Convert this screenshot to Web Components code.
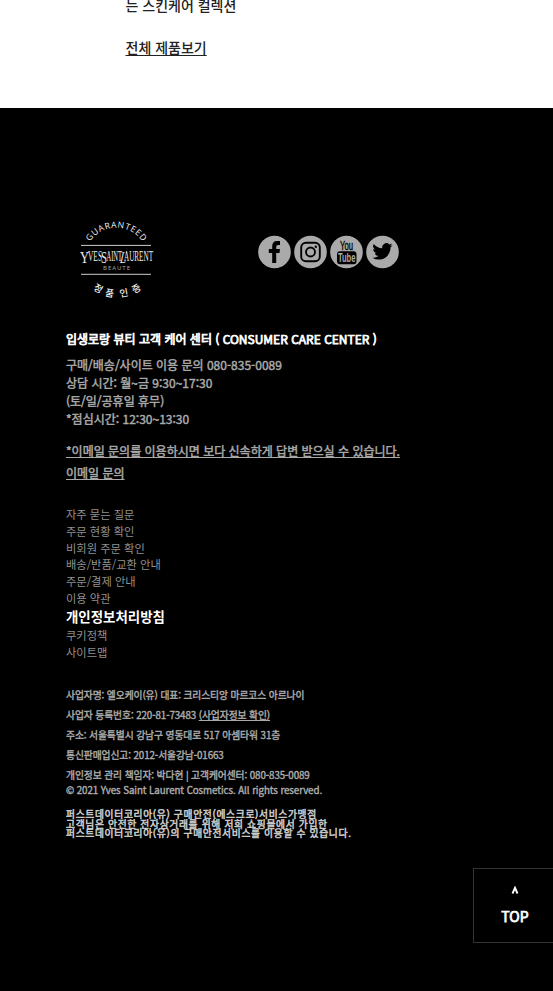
<!DOCTYPE html>
<html lang="ko"><head><meta charset="utf-8"><title>YSL Beauty</title>
<style>
body{margin:0;background:#000;overflow:hidden;font-family:"Noto Sans CJK KR","Noto Sans",sans-serif}
</style></head><body>
<ysl-page></ysl-page>
<script>
function define(name, html){
  const t=document.createElement('template');t.innerHTML=html;
  customElements.define(name,class extends HTMLElement{
    constructor(){super();this.attachShadow({mode:'open'}).append(t.content.cloneNode(true));}
  });
}
define('ysl-promo',`<style>
:host{display:block;height:108px;background:#fff;color:#222;font-size:14px;font-weight:500;line-height:21px;padding-left:125.5px;box-sizing:border-box;overflow:hidden}
p{margin:-5px 0 21px}a{text-decoration:underline;text-underline-offset:2px}
</style><p>는 스킨케어 컬렉션</p><a>전체 제품보기</a>`);
define('ysl-seal',`<style>
:host{display:block;width:76px;height:80px;margin-top:1px}svg{display:block;overflow:visible}
text{fill:#f2f2f2;text-anchor:middle}
.s{font-family:"Open Sans",sans-serif}
.k{font:500 9.500px "Noto Sans CJK KR",sans-serif}
.w{font-family:"Liberation Serif",serif;text-anchor:start;fill:#eee}
</style><svg width="76" height="80" viewBox="0 0 76 80">
<defs><path id="top" d="M8.200 24.500A32 32 0 0 1 68.200 24.500"/></defs>
<text class="s" font-size="8.600" transform="translate(0 3)"><textPath href="#top" startOffset="50%" textLength="62">GUARANTEED</textPath></text>
<path d="M3 24.400H73M3 53.300H73" stroke="#ccc" stroke-width="1"/>
<text class="w" x="2" y="41.500" font-size="16.500" textLength="9" lengthAdjust="spacingAndGlyphs">Y</text>
<text class="w" x="10" y="40" font-size="14" textLength="14" lengthAdjust="spacingAndGlyphs">VES</text>
<text class="w" x="23" y="41.500" font-size="16.500" textLength="6" lengthAdjust="spacingAndGlyphs">S</text>
<text class="w" x="28.500" y="40" font-size="14" textLength="15.500" lengthAdjust="spacingAndGlyphs">AINT</text>
<text class="w" transform="translate(41.500 41.500) skewX(-12)" font-size="16.500" textLength="6" lengthAdjust="spacingAndGlyphs">L</text>
<text class="w" x="46" y="40" font-size="14" textLength="29" lengthAdjust="spacingAndGlyphs">AURENT</text>
<text class="s" x="38.500" y="49" font-size="6" textLength="27" style="fill:#aaa">BEAUTE</text>
<text class="k" transform="translate(18.500 70.500) rotate(31)">정</text>
<text class="k" transform="translate(31 75.500) rotate(10)">품</text>
<text class="k" transform="translate(46.500 75.500) rotate(-11)">인</text>
<text class="k" transform="translate(60 70.500) rotate(-31)">증</text>
</svg>`);
define('ysl-social',`<style>
:host{display:flex;gap:3px}svg{display:block;width:33px;height:34px}circle.b{fill:#aaa}
text{font:700 12px "Liberation Sans Narrow","Liberation Sans",sans-serif;text-anchor:middle}
</style>
<svg viewBox="0 0 33 34"><circle class="b" cx="16.500" cy="17" r="16.300"/><path d="M14.200 28V18H10.800V14H14.200V11.500Q14.200 6 19 6H22V10H20Q18.200 10 18.200 12V14H22L21.500 18H18.200V28Z"/></svg>
<svg viewBox="0 0 33 34"><circle class="b" cx="16.500" cy="17" r="16.300"/><g fill="none" stroke="#000" stroke-width="1.900"><rect x="7.200" y="7.700" width="18.600" height="18.600" rx="4.800"/><circle cx="16.500" cy="17" r="4.500"/></g><circle cx="21.800" cy="11.800" r="1.200"/></svg>
<svg viewBox="0 0 33 34"><circle class="b" cx="16.500" cy="17" r="16.300"/><text x="16.500" y="14.600" textLength="13" lengthAdjust="spacingAndGlyphs" style="font-weight:400;font-size:12.500px;stroke:#000;stroke-width:.35">You</text><rect x="7" y="16.300" width="19.500" height="13" rx="3"/><text x="16.700" y="27.200" textLength="17.500" lengthAdjust="spacingAndGlyphs" fill="#aaa">Tube</text></svg>
<svg viewBox="0 0 33 34"><circle class="b" cx="16.500" cy="17" r="16.300"/><path transform="translate(6.400 6.300) scale(.84)" d="M23.950 4.570a10 10 0 0 1-2.820.770 4.960 4.960 0 0 0 2.160-2.720c-.950.560-2 .960-3.130 1.180a4.920 4.920 0 0 0-8.380 4.480C7.690 8.100 4.070 6.130 1.640 3.160a4.930 4.930 0 0 0 1.520 6.570 4.900 4.900 0 0 1-2.230-.610v.060c0 2.390 1.700 4.380 3.950 4.830a5 5 0 0 1-2.210.080 4.940 4.940 0 0 0 4.600 3.420A9.870 9.870 0 0 1 0 19.540a14 14 0 0 0 7.550 2.210c9.050 0 14-7.500 14-13.980v-.640a9.940 9.940 0 0 0 2.400-2.560Z"/></svg>`);
define('ysl-care',`<style>
:host{display:block;color:#aaa;font-size:12px;line-height:18px;white-space:nowrap;-webkit-text-stroke:.45px}
h2{margin:0 0 8px;font-size:12px;line-height:18px;font-weight:400;color:#fff;-webkit-text-stroke:.75px}
p{margin:0}.m{margin-top:12px;line-height:22px}a{text-decoration:underline;text-underline-offset:1px}
</style><h2>입생로랑 뷰티 고객 케어 센터 ( CONSUMER CARE CENTER )</h2>
<p>구매/배송/사이트 이용 문의 080-835-0089</p><p>상담 시간: 월~금 9:30~17:30</p><p>(토/일/공휴일 휴무)</p><p>*점심시간: 12:30~13:30</p>
<div class="m"><a>*이메일 문의를 이용하시면 보다 신속하게 답변 받으실 수 있습니다.</a><br><a>이메일 문의</a></div>`);
define('ysl-links',`<style>
:host{display:grid;color:#909090;font-size:11.250px;line-height:16.8px;justify-items:start}
::slotted([strong]){color:#fff;font-size:13.450px;font-weight:700;line-height:18px;margin:0 0 2px}
</style><slot></slot>`);
define('ysl-legal',`<style>
:host{display:block;color:#aaa;font-size:9.750px;line-height:20px;white-space:nowrap;-webkit-text-stroke:.4px}
p{margin:0;letter-spacing:-.08px}.c{line-height:15px;margin-top:-2px;letter-spacing:-.07px}a{text-decoration:underline;text-underline-offset:1px}
.e{margin-top:12px;line-height:9.200px;color:#ccc;letter-spacing:.68px;-webkit-text-stroke:.5px}
</style><p>사업자명: 엘오케이(유) 대표: 크리스티앙 마르코스 아르나이</p><p>사업자 등록번호: 220-81-73483 <a>(사업자정보 확인)</a></p><p>주소: 서울특별시 강남구 영동대로 517 아셈타워 31층</p><p>통신판매업신고: 2012-서울강남-01663</p><p>개인정보 관리 책임자: 박다현 | 고객케어센터: 080-835-0089</p><p class="c">© 2021 Yves Saint Laurent Cosmetics. All rights reserved.</p>
<div class="e">퍼스트데이터코리아(유) 구매안전(에스크로)서비스가맹점<br>고객님은 안전한 전자상거래를 위해 저희 쇼핑몰에서 가입한<br>퍼스트데이터코리아(유)의 구매안전서비스를 이용할 수 있습니다.</div>`);
define('ysl-top',`<style>
:host{position:fixed;left:473px;top:868px;width:84px;height:75px;box-sizing:border-box;border:1px solid #333;background:#000;color:#fff;display:flex;flex-direction:column;align-items:center}
svg{margin-top:17px;display:block}b{font-size:14px;line-height:20px;margin-top:12px;font-weight:400;-webkit-text-stroke:.75px}
</style><svg width="8" height="8" viewBox="0 0 8 8"><path d="M1.500 7.500L4 1.800L6.500 7.500" fill="none" stroke="#fff" stroke-width="1.900"/></svg><b>TOP</b>`);
define('ysl-page',`<style>
:host{display:block;height:991px;overflow:hidden}
footer{padding:112px 0 0 66px}.r{display:flex;padding-left:12px}ysl-social{margin:15px 0 0 104px}
ysl-care{margin-top:29px}ysl-links{margin-top:22px}ysl-legal{margin-top:25px}
</style><ysl-promo></ysl-promo><footer><div class="r"><ysl-seal></ysl-seal><ysl-social></ysl-social></div><ysl-care></ysl-care>
<ysl-links><a>자주 묻는 질문</a><a>주문 현황 확인</a><a>비회원 주문 확인</a><a>배송/반품/교환 안내</a><a>주문/결제 안내</a><a>이용 약관</a><a strong>개인정보처리방침</a><a>쿠키정책</a><a>사이트맵</a></ysl-links><ysl-legal></ysl-legal></footer><ysl-top></ysl-top>`);
</script></body></html>
